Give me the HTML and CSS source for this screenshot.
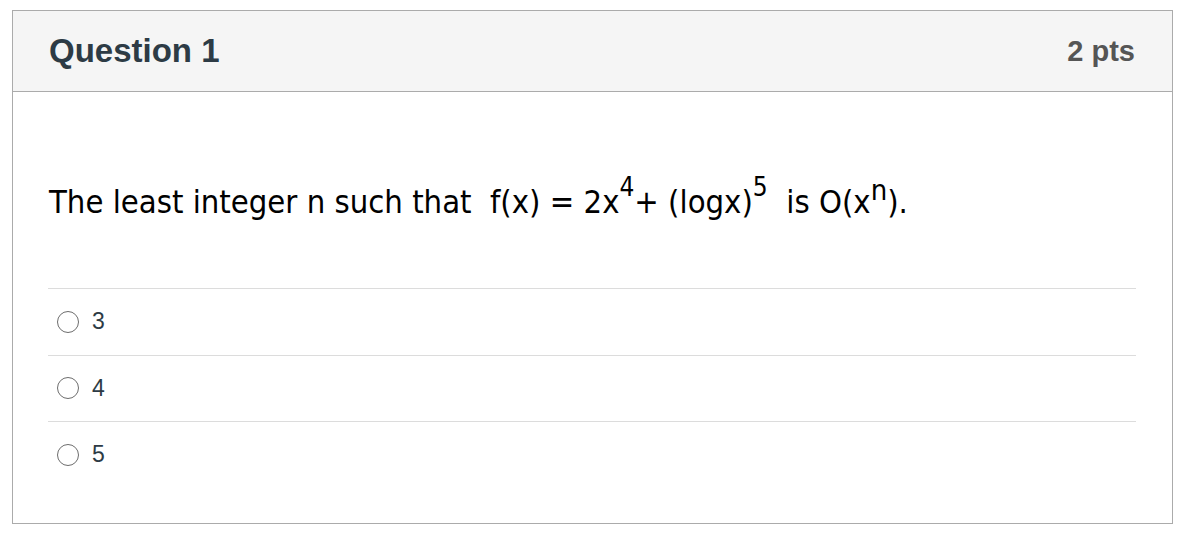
FILE: index.html
```html
<!DOCTYPE html>
<html>
<head>
<meta charset="utf-8">
<link rel="stylesheet" href="styles.css">
</head>
<body>
<div class="page">
  <div class="quiz">
    <div class="quiz-head">
      <h2 class="quiz-title">Question 1</h2>
      <span class="quiz-pts">2 pts</span>
    </div>
    <div class="quiz-body">
      <p class="question">The least integer n such that&nbsp; f(x) = 2x<sup class="sup">4</sup>+ (logx)<sup class="sup">5</sup>&nbsp; is O(x<sup class="sup sup-n">n</sup>).</p>
      <div class="answers">
        <label class="answer"><span class="radio"></span><span class="answer-text">3</span></label>
        <label class="answer"><span class="radio"></span><span class="answer-text">4</span></label>
        <label class="answer"><span class="radio"></span><span class="answer-text">5</span></label>
      </div>
    </div>
  </div>
</div>
</body>
</html>
```
FILE: styles.css
```css
html, body {
  margin: 0;
  padding: 0;
  background: #fff;
}
.page {
  padding: 10px 11px 0 12px;
}
.quiz {
  border: 1px solid #ababab;
  background: #fff;
}
.quiz-head {
  height: 80px;
  background: #f5f5f5;
  border-bottom: 1px solid #ababab;
  display: flex;
  align-items: center;
  justify-content: space-between;
  padding: 0 37px 0 36px;
}
.quiz-title {
  margin: 0;
  font-family: "Liberation Sans", Arial, sans-serif;
  font-weight: bold;
  font-size: 33px;
  color: #2d3b45;
}
.quiz-pts {
  font-family: "Liberation Sans", Arial, sans-serif;
  font-weight: bold;
  font-size: 29px;
  color: #555;
}
.quiz-body {
  padding: 0 36px 35px 35px;
}
.question {
  margin: 0;
  padding: 88px 0 64px 1px;
  font-family: "DejaVu Sans", Tahoma, sans-serif;
  font-stretch: condensed;
  font-size: 32.5px;
  line-height: 44px;
  color: #000;
}
.sup {
  font-size: 26px;
  line-height: 0;
  vertical-align: 17px;
}
.sup-n {
  font-size: 29px;
  vertical-align: 13px;
}
.answers {
  display: flex;
  flex-direction: column;
}
.answer {
  box-sizing: border-box;
  display: flex;
  align-items: center;
  height: 66.5px;
  border-top: 1px solid #dcdcdc;
  font-family: "Liberation Sans", Arial, sans-serif;
  font-size: 23px;
  color: #2d3b45;
}
.radio {
  width: 20px;
  height: 20px;
  border: 1.5px solid #6d6d6d;
  border-radius: 50%;
  margin: 0 13px 0 9px;
  box-sizing: content-box;
}
.answer-text {
  line-height: 1;
}
```
